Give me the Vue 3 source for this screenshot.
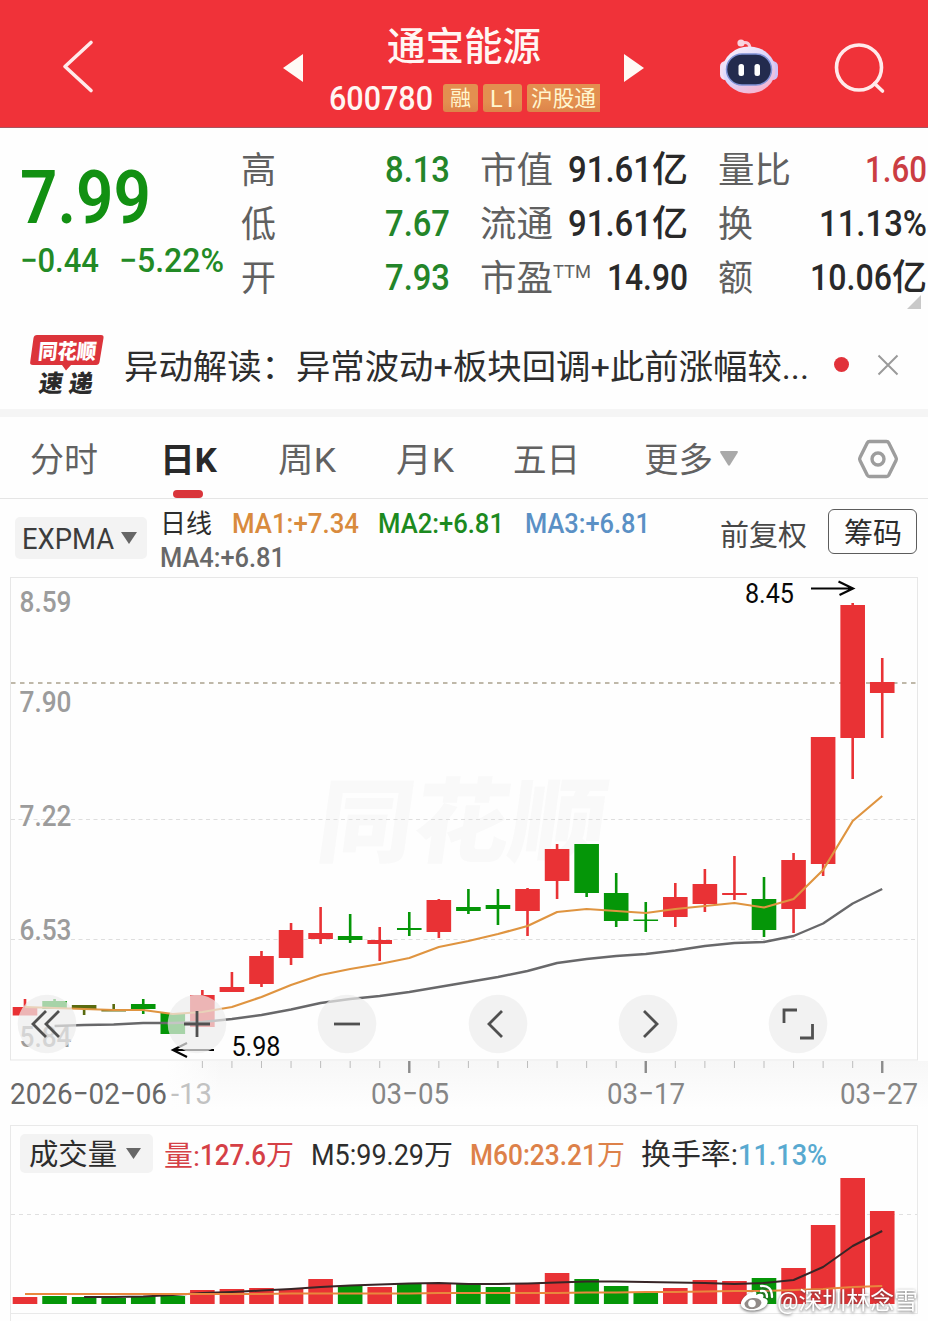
<script setup>
import { h } from 'vue'

const Fit = (p) =>
  h('svg', { class: 'fit', width: p.w, height: p.s, style: { overflow: 'visible', display: 'block', flex: 'none' } }, [
    h('text', {
      x: 0, y: p.s * 0.86 + (p.dy || 0), textLength: p.w, lengthAdjust: 'spacingAndGlyphs',
      'font-size': p.s, 'font-weight': p.b || 400, fill: 'currentColor'
    }, p.t)
  ])
Fit.props = ['t', 'w', 's', 'b', 'dy']

const cx = (i) => 25 + 29.56 * i
// colour, body top, body bottom, wick top, wick bottom
const candles = [
  ['r', 1007, 1015.5, 999, 1015], ['g', 1001, 1009, 999, 1009], ['o', 1005, 1009, 1005, 1015],
  ['o', 1010, 1011.5, 1004, 1011], ['g', 1004, 1009, 999, 1014], ['g', 1013, 1034, 1013, 1034],
  ['r', 995, 1027, 990, 1027], ['r', 987, 992, 972, 992], ['r', 956, 984, 951, 987],
  ['r', 930, 958, 923, 965], ['r', 933, 939, 907, 944], ['g', 936, 940, 914, 943],
  ['r', 940, 944, 927, 961], ['g', 928, 930, 912, 936], ['r', 900, 932, 899, 938],
  ['g', 907, 911, 889, 914], ['g', 905, 909, 889, 925], ['r', 889, 911, 888, 936],
  ['r', 849, 881, 844, 899], ['g', 844, 893, 844, 897], ['g', 893, 921, 873, 927],
  ['g', 919.5, 921, 902, 932], ['r', 897, 917, 883, 927], ['r', 884, 904, 869, 912],
  ['r', 893, 895, 856, 900], ['g', 899, 930, 877, 937], ['r', 860, 909, 853, 933],
  ['r', 737, 864, 737, 876], ['r', 605, 738, 603, 779], ['r', 682, 693, 658, 738]
]
const line = (ys, from = 0) => ys.map((y, i) => `${cx(i + from).toFixed(1)},${y}`).join(' ')
const fast = line([1007, 1008, 1009, 1010, 1010, 1014, 1012, 1007, 997, 985, 975, 969, 964, 958, 947, 941, 934, 926, 912, 909, 911, 913, 909, 906, 903, 907.5, 899, 870, 821, 796])
const slow = line([1026, 1025, 1024.5, 1023, 1023, 1022, 1019, 1015, 1009.5, 1003, 999, 996, 992, 987, 982, 977, 971, 963, 959, 956, 954, 950.5, 946, 943, 942, 936, 923.5, 903.5, 889], 1)

const volumes = [1297, 1296, 1297, 1298, 1296, 1296, 1290, 1289, 1288, 1289, 1279, 1286, 1287, 1284, 1284, 1284, 1287, 1283, 1273, 1279, 1286, 1292, 1288, 1280, 1281, 1278, 1268, 1225, 1178, 1211]
const m5 = line([1297, 1297, 1296.5, 1295, 1293, 1292, 1290.5, 1289, 1287, 1285.5, 1284.5, 1283.5, 1283, 1284, 1284, 1283.5, 1282.5, 1281.5, 1281.5, 1282, 1282.5, 1283, 1284, 1283, 1280, 1267, 1246, 1231], 2)
const m60 = line([1294, 1294, 1294, 1294, 1294, 1294, 1294, 1294, 1294, 1293.5, 1293.5, 1293.5, 1293.5, 1293.5, 1293, 1293, 1293, 1293, 1293, 1292.5, 1292.5, 1292, 1292, 1291.5, 1291, 1291, 1290, 1289, 1287, 1286])

const prices = [['8.59', 612], ['7.90', 712], ['7.22', 826], ['6.53', 939.5], ['5.84', 1046.5]]
const ticks = Array.from({ length: 24 }, (_, k) => k + 6)
const major = (i) => i === 13 || i === 21 || i === 29
const buttons = [
  'M-1 -13L-14 0L-1 13M12 -13L-1 0L12 13',
  'M-13 0H13M0 -13V13',
  'M-13 0H13',
  'M4 -13L-9 0L4 13',
  'M-4 -13L9 0L-4 13',
  'M-1 -14H-14V-1M2 14H14.500V0'
]
</script>

<template>
  <main class="page">
    <header class="top">
      <svg class="back" width="34" height="56" viewBox="61 38 34 56"><path d="M91 42.500L65 66.500L91 90.500" /></svg>
      <svg class="tri left" width="20" height="28" viewBox="0 0 20 28"><path d="M0 14L20 0V28Z" /></svg>
      <div class="stock">
        <Fit t="通宝能源" :w="154" :s="39" :b="500" :dy="-1.5" />
        <div class="code">
          <Fit t="600780" :w="104" :s="34" :b="500" />
          <span class="tag t1"><Fit t="融" :w="21" :s="21" /></span>
          <span class="tag t2"><Fit t="L1" :w="26" :s="24" /></span>
          <span class="tag t3"><Fit t="沪股通" :w="65" :s="22" /></span>
        </div>
      </div>
      <svg class="tri right" width="20" height="28" viewBox="0 0 20 28"><path d="M20 14L0 0V28Z" /></svg>
      <svg class="robot" width="60" height="58" viewBox="0 0 60 58">
        <defs>
          <linearGradient id="shell" x1="0" y1="0" x2=".6" y2="1"><stop offset="0" stop-color="#fff3fa" /><stop offset=".6" stop-color="#d8d3fb" /><stop offset="1" stop-color="#f6b7d2" /></linearGradient>
        </defs>
        <path d="M23 5Q31 3 31 11" fill="none" stroke="#f9c9d8" stroke-width="3" />
        <circle cx="22" cy="5" r="3.600" fill="#f9d3df" />
        <rect x="1" y="23" width="12" height="19" rx="5.500" fill="#f3dff4" />
        <rect x="47" y="23" width="12" height="19" rx="5.500" fill="#cfc2f8" />
        <ellipse cx="30" cy="32" rx="26.500" ry="23.500" fill="url(#shell)" />
        <rect x="7.500" y="16" width="45" height="31" rx="15.500" fill="#232b4e" stroke="#7f91d6" stroke-width="1.500" />
        <rect x="19.500" y="26" width="5.500" height="12" rx="2.500" fill="#fff" />
        <rect x="35.500" y="26" width="5.500" height="12" rx="2.500" fill="#fff" />
      </svg>
      <svg class="search" width="54" height="54" viewBox="832 42 54 54"><circle cx="858" cy="67.500" r="22.500" /><path d="M873.500 83.500L881.500 91" /></svg>
    </header>

    <section class="quote">
      <div class="now">
        <Fit class="big" t="7.99" :w="131" :s="74" :b="600" :dy="-1" />
        <div class="chg"><Fit t="−0.44" :w="79" :s="34" :b="500" /><Fit t="−5.22%" :w="105" :s="34" :b="500" /></div>
      </div>
      <div class="col c1">
        <div><Fit t="高" :w="35" :s="36" :dy="1" /><Fit class="green" t="8.13" :w="65" :s="37" :b="500" :dy="-1" /></div>
        <div><Fit t="低" :w="35" :s="36" :dy="1" /><Fit class="green" t="7.67" :w="65" :s="37" :b="500" :dy="-1" /></div>
        <div><Fit t="开" :w="35" :s="36" :dy="1" /><Fit class="green" t="7.93" :w="65" :s="37" :b="500" :dy="-1" /></div>
      </div>
      <div class="col c2">
        <div><Fit t="市值" :w="73" :s="36" :dy="1" /><span class="val"><Fit t="91.61" :w="84" :s="37" :b="500" :dy="-1" /><Fit t="亿" :w="36" :s="36" :b="500" /></span></div>
        <div><Fit t="流通" :w="73" :s="36" :dy="1" /><span class="val"><Fit t="91.61" :w="84" :s="37" :b="500" :dy="-1" /><Fit t="亿" :w="36" :s="36" :b="500" /></span></div>
        <div><span class="pe"><Fit t="市盈" :w="73" :s="36" :dy="1" /><Fit class="ttm" t="TTM" :w="38" :s="19" /></span><span class="val"><Fit t="14.90" :w="81" :s="37" :b="500" :dy="-1" /></span></div>
      </div>
      <div class="col c3">
        <div><Fit t="量比" :w="73" :s="36" :dy="1" /><Fit class="up" t="1.60" :w="62" :s="37" :b="500" :dy="-1" /></div>
        <div><Fit t="换" :w="35" :s="36" :dy="1" /><Fit class="dark" t="11.13%" :w="108" :s="37" :b="500" :dy="-1" /></div>
        <div><Fit t="额" :w="35" :s="36" :dy="1" /><span class="val"><Fit t="10.06" :w="82" :s="37" :b="500" :dy="-1" /><Fit t="亿" :w="35" :s="36" :b="500" /></span></div>
      </div>
      <svg class="corner" width="14" height="14" viewBox="0 0 14 14"><path d="M14 0V14H0Z" fill="#c9c9c9" /></svg>
    </section>

    <section class="notice">
      <svg class="logo" width="76" height="62" viewBox="29 334 76 62">
        <path d="M37 335H101Q104 335 103.500 338L99.500 362Q99 365 96 365H71L66 370.500L62 365H33Q29.500 365 30.200 362L33.500 338Q34 335 37 335Z" fill="#dc343b" />
        <text transform="translate(37.500 358.500) skewX(-6)" font-size="21" font-weight="900" textLength="58" lengthAdjust="spacingAndGlyphs" fill="#fff">同花顺</text>
        <text transform="translate(38 391.500) skewX(-8)" font-size="24" font-weight="900" textLength="54" lengthAdjust="spacing" fill="#2b2b2b">速递</text>
      </svg>
      <Fit class="msg" t="异动解读：异常波动+板块回调+此前涨幅较..." :w="685" :s="34" :dy="2" />
      <i class="dot"></i>
      <svg class="close" width="22" height="22" viewBox="0 0 22 22"><path d="M1.500 1.500L20.500 20.500M20.500 1.500L1.500 20.500" /></svg>
    </section>

    <nav class="tabs">
      <Fit t="分时" :w="68" :s="34" :dy="1" />
      <span class="on"><Fit t="日K" :w="57" :s="34" :b="700" :dy="1" /><i></i></span>
      <Fit class="n3" t="周K" :w="58" :s="34" :dy="1" />
      <Fit class="n4" t="月K" :w="58" :s="34" :dy="1" />
      <Fit class="n5" t="五日" :w="67" :s="34" :dy="1" />
      <Fit class="n6" t="更多" :w="69" :s="34" :dy="1" />
      <svg class="more" width="18" height="15" viewBox="0 0 18 15"><path d="M1 0H17Q18.500 0 17.500 2L10 14Q9 15.500 8 14L.5 2Q-.5 0 1 0Z" fill="#a9a9a9" /></svg>
      <svg class="hex" width="42" height="40" viewBox="0 0 42 40"><path d="M12.500 2.500H29.500Q31 2.500 31.800 4L39 18.500Q39.800 20 39 21.500L31.800 36Q31 37.500 29.500 37.500H12.500Q11 37.500 10.200 36L3 21.500Q2.200 20 3 18.500L10.200 4Q11 2.500 12.500 2.500Z" /><circle cx="21" cy="20" r="6" /></svg>
    </nav>

    <section class="indicators">
      <span class="pick expma"><Fit t="EXPMA" :w="92" :s="29" /><svg width="16" height="12" viewBox="0 0 16 12"><path d="M0 0H16L8 12Z" fill="#666" /></svg></span>
      <div class="mas">
        <div>
          <Fit t="日线" :w="52" :s="26" :dy="1" />
          <Fit class="ma1" t="MA1:+7.34" :w="127" :s="28" :b="500" />
          <Fit class="ma2" t="MA2:+6.81" :w="126" :s="28" :b="500" />
          <Fit class="ma3" t="MA3:+6.81" :w="125" :s="28" :b="500" />
        </div>
        <div class="ma4"><Fit t="MA4:+6.81" :w="125" :s="28" :b="500" /></div>
      </div>
      <Fit class="fq" t="前复权" :w="87" :s="29" :dy="2" />
      <span class="chip"><Fit t="筹码" :w="58" :s="29" :dy="2" /></span>
    </section>

    <section class="kline">
      <svg width="908" height="484" viewBox="10 577 908 484">
        <rect x="10.500" y="577.500" width="907" height="482.500" fill="#fefefe" stroke="#e7e7e7" />
        <text class="brand" transform="translate(314 855) skewX(-8)" textLength="288" lengthAdjust="spacingAndGlyphs">同花顺</text>
        <path d="M11 819.500H917M11 939.500H917" stroke="#dedede" stroke-dasharray="4 3.500" />
        <path d="M11 683H917" stroke="#aaa18d" stroke-width="1.600" stroke-dasharray="4.500 4.500" />
        <text v-for="p in prices" :key="p[0]" class="price" x="19.500" :y="p[1]" textLength="52" lengthAdjust="spacingAndGlyphs">{{ p[0] }}</text>
        <g v-for="(c, i) in candles" :key="i" :class="'k-' + c[0]">
          <rect :x="cx(i) - 1.3" :y="c[3]" width="2.600" :height="c[4] - c[3]" />
          <rect :x="cx(i) - 12.3" :y="c[1]" width="24.600" :height="c[2] - c[1]" />
        </g>
        <polyline :points="slow" fill="none" stroke="#68686a" stroke-width="2.400" stroke-linejoin="round" />
        <polyline :points="fast" fill="none" stroke="#df9440" stroke-width="2.200" stroke-linejoin="round" />
        <text class="mark" x="745" y="603" textLength="49" lengthAdjust="spacingAndGlyphs">8.45</text>
        <path d="M811 588.500H853M838.500 581.500L853 588.500L839.500 595" class="arrow" />
        <text class="mark" x="231.500" y="1056" textLength="49" lengthAdjust="spacingAndGlyphs">5.98</text>
        <path d="M214 1050H173M187 1043L173 1050L187 1057" class="arrow" />
      </svg>
      <div class="controls">
        <svg v-for="(d, i) in buttons" :key="i" width="60" height="60" viewBox="-30 -30 60 60"><circle r="29.300" /><path :d="d" /></svg>
      </div>
    </section>

    <section class="axis">
      <svg width="908" height="12" viewBox="10 1061 908 12">
        <rect v-for="i in ticks" :key="i" :x="cx(i) - (major(i) ? 1.2 : 0.5)" y="1061" :width="major(i) ? 2.4 : 1" :height="major(i) ? 12 : 7" :fill="major(i) ? '#8c8c8c' : '#bdbdbd'" />
      </svg>
      <div class="dates">
        <Fit class="d0" t="2026−02−06" :w="157" :s="30" :dy="-1" /><Fit class="d1" t="-13" :w="41" :s="30" :dy="-1" /><Fit class="d2" t="03−05" :w="78" :s="30" :dy="-1" /><Fit class="d3" t="03−17" :w="78" :s="30" :dy="-1" /><Fit class="d4" t="03−27" :w="78" :s="30" :dy="-1" />
      </div>
    </section>

    <section class="volume">
      <div class="vhead">
        <span class="pick vol"><Fit t="成交量" :w="88" :s="29" :dy="1.5" /><svg width="15" height="11" viewBox="0 0 15 11"><path d="M0 0H15L7.500 11Z" fill="#666" /></svg></span>
        <span class="vq"><Fit t="量:" :w="36" :s="28" :dy="1.5" /><Fit t="127.6" :w="66" :s="30" :b="500" /><Fit t="万" :w="28" :s="28" :dy="1" /></span>
        <span class="v5"><Fit t="M5:99.29" :w="113" :s="30" /><Fit t="万" :w="29" :s="28" :dy="1" /></span>
        <span class="v60"><Fit t="M60:23.21" :w="127" :s="30" :b="500" /><Fit t="万" :w="28" :s="28" :dy="1" /></span>
        <span class="vt"><Fit t="换手率:" :w="97" :s="29" :dy="1.5" /><Fit class="blue" t="11.13%" :w="89" :s="30" :b="500" /></span>
      </div>
      <svg width="906" height="135" viewBox="11 1178 906 135">
        <path d="M11 1214.500H917" stroke="#e0e0e0" stroke-dasharray="4 4" />
        <rect v-for="(y, i) in volumes" :key="i" :x="cx(i) - 12.3" :y="y" width="24.600" :height="1304 - y" :class="'k-' + (candles[i][0] === 'r' ? 'r' : 'g')" />
        <polyline :points="m5" fill="none" stroke="#382526" stroke-width="2" stroke-linejoin="round" />
        <polyline :points="m60" fill="none" stroke="#e9873d" stroke-width="2" />
      </svg>
    </section>
    <div class="foot"></div>

    <div class="credit">
      <svg width="34" height="28" viewBox="0 0 34 28">
        <path d="M13 8C7 9 0 16 1 21C2 28 22 29 27 20C29 16 26 14 23 14C25 9 20 9 16 11C17 8 16 7 13 8Z" fill="#fff" />
        <ellipse cx="13" cy="19.500" rx="8.500" ry="5.500" transform="rotate(-8 13 19.500)" fill="#918b88" />
        <circle cx="12" cy="19.500" r="3.800" fill="#fff" />
        <path d="M21 7Q27 6 27 13M21 2Q32 1 32 13" fill="none" stroke="#fff" stroke-width="2.300" stroke-linecap="round" />
      </svg>
      <Fit t="@深圳林念雪" :w="141" :s="24" :dy="2" />
    </div>
  </main>
</template>

<style>
body { margin: 0; background: #fefefe; }
</style>

<style scoped>
.page { position: relative; width: 928px; height: 1321px; overflow: hidden; background: #fefefe; color: #2d2d2d; font-family: Roboto, "Noto Sans CJK SC", sans-serif; }
svg { display: block; flex: none; }
i { display: block; }
.top { box-sizing: border-box; height: 128px; background: #f03239; border-bottom: 1px solid #a85560; display: flex; align-items: flex-start; color: #fff6f3; }
.back { margin: 38px 0 0 61px; }
.back path, .search path, .search circle { fill: none; stroke: #ffeaea; stroke-width: 3.6; stroke-linecap: round; stroke-linejoin: round; }
.tri { fill: #fffaf5; margin-top: 54px; }
.left { margin-left: 188px; }
.stock { width: 321px; display: flex; flex-direction: column; align-items: center; padding-top: 28px; }
.code { width: 275px; display: flex; align-items: center; margin: 14px 0 0 6px; }
.tag { height: 28px; box-sizing: border-box; padding-bottom: 1px; display: flex; align-items: center; justify-content: center; border-radius: 3px; background: linear-gradient(#e38f50 65%, #dd8349); color: #fff6cf; }
.t1 { width: 35px; margin-left: 10px; }
.t2 { width: 39px; margin-left: 5px; }
.t3 { width: 73px; margin-left: 5px; border-radius: 3px 0 0 3px; }
.robot { margin: 38px 0 0 75px; }
.search { margin: 42px 0 0 54px; }

.quote { position: relative; height: 192px; display: flex; color: #606060; }
.now { width: 241px; box-sizing: border-box; padding: 32px 0 0 20px; color: #129012; }
.chg { display: flex; gap: 20px; margin-top: 9px; color: #228a25; }
.green { color: #238529; }
.up { color: #cb3d42; }
.dark, .val { color: #292929; }
.col { padding-top: 14px; display: flex; flex-direction: column; }
.col > div { height: 54px; display: flex; align-items: center; justify-content: space-between; }
.val, .pe { display: flex; align-items: center; }
.pe { align-items: flex-start; }
.ttm { margin-top: 3px; }
.c1 { width: 209px; }
.c2 { width: 208px; margin-left: 30px; }
.c3 { width: 209px; margin-left: 30px; }
.corner { position: absolute; right: 7px; top: 167px; }

.notice { height: 89px; border-bottom: 8px solid #f5f5f5; display: flex; align-items: center; }
.logo { margin-left: 29px; }
.msg { margin-left: 19px; }
.dot { width: 15px; height: 15px; border-radius: 50%; background: #e1323a; margin-left: 25px; }
.close { margin-left: 28px; }
.close path { stroke: #9a9a9a; stroke-width: 2; fill: none; }

.tabs { box-sizing: border-box; height: 82px; border-bottom: 1px solid #e5e5e5; display: flex; align-items: center; padding: 2px 0 0 30px; color: #626262; }
.on { width: 58px; margin-left: 62px; color: #292929; position: relative; }
.on i { position: absolute; left: 13px; top: 48px; width: 30px; height: 8px; border-radius: 4px; background: #d9353b; }
.n3 { margin-left: 60px; }
.n4 { margin-left: 60px; }
.n5 { margin-left: 59px; }
.n6 { margin-left: 64px; }
.more { margin-left: 7px; }
.hex { margin-left: 119px; }
.hex path, .hex circle { fill: none; stroke: #9d9d9d; stroke-width: 3.4; }

.indicators { height: 78px; display: flex; align-items: flex-start; }
.pick { box-sizing: border-box; background: #f3f3f3; border-radius: 5px; display: flex; align-items: center; }
.expma { width: 132px; height: 42px; margin: 18px 0 0 15px; padding-left: 7px; gap: 7px; color: #3c3c3c; }
.mas { width: 560px; margin-left: 13px; padding-top: 10px; }
.mas > div { display: flex; align-items: center; height: 28px; }
.mas > .ma4 { margin-top: 6px; color: #686868; }
.ma1 { color: #d98b3d; margin-left: 20px; }
.ma2 { color: #1c8a20; margin-left: 19px; }
.ma3 { color: #5a90c5; margin-left: 21px; }
.fq { margin-top: 20px; color: #484848; }
.chip { box-sizing: border-box; width: 89px; height: 45px; margin: 10px 0 0 21px; border: 1px solid #5c5c5c; border-radius: 6px; display: flex; align-items: center; justify-content: center; }

.kline { position: relative; width: 908px; margin-left: 10px; height: 484px; }
.brand { font-size: 92px; font-weight: 900; fill: #f9f9f9; }
.price { font-size: 29px; font-weight: 500; fill: #9c9c9c; }
.mark { font-size: 27px; fill: #080808; }
.arrow { fill: none; stroke: #050505; stroke-width: 2.2; }
.k-r { fill: #e93235; }
.k-g { fill: #059608; }
.k-o { fill: #5a6b10; }
.controls { position: absolute; left: 7px; top: 417px; display: flex; gap: 90.2px; }
.controls circle { fill: rgba(236, 236, 236, .7); }
.controls path { fill: none; stroke: #505050; stroke-width: 2.8; }

.axis { height: 64px; padding-left: 10px; background: linear-gradient(90deg, #fefefe 18%, transparent 24%), linear-gradient(#f7f7f7, #fefefe 75%); }
.dates { display: flex; margin-top: 6px; color: #868686; }
.d0 { color: #686868; }
.d1 { color: #c2c2c2; margin-left: 4px; }
.d2 { margin-left: 159px; }
.d3 { margin-left: 158px; }
.d4 { margin-left: 155px; }

.volume { width: 906px; margin-left: 10px; border: 1px solid #e9e9e9; }
.vhead { height: 52px; box-sizing: border-box; display: flex; align-items: flex-start; padding-top: 8px; }
.vhead > span { height: 39px; display: flex; align-items: center; }
.vol { width: 133px; margin-left: 9px; padding-left: 9px; gap: 9px; }
.vq { color: #d54046; margin-left: 11px; }
.v5 { margin-left: 17px; }
.v60 { color: #dd8149; margin-left: 17px; }
.vt { margin-left: 16px; }
.blue { color: #58a9d0; }
.foot { height: 8px; margin-left: 10px; border-left: 1px solid #e9e9e9; }
.credit { position: absolute; left: 740px; top: 1284px; display: flex; align-items: center; gap: 3px; color: #fff; filter: drop-shadow(0 1px 1.5px rgba(70, 70, 70, .85)); }
</style>
